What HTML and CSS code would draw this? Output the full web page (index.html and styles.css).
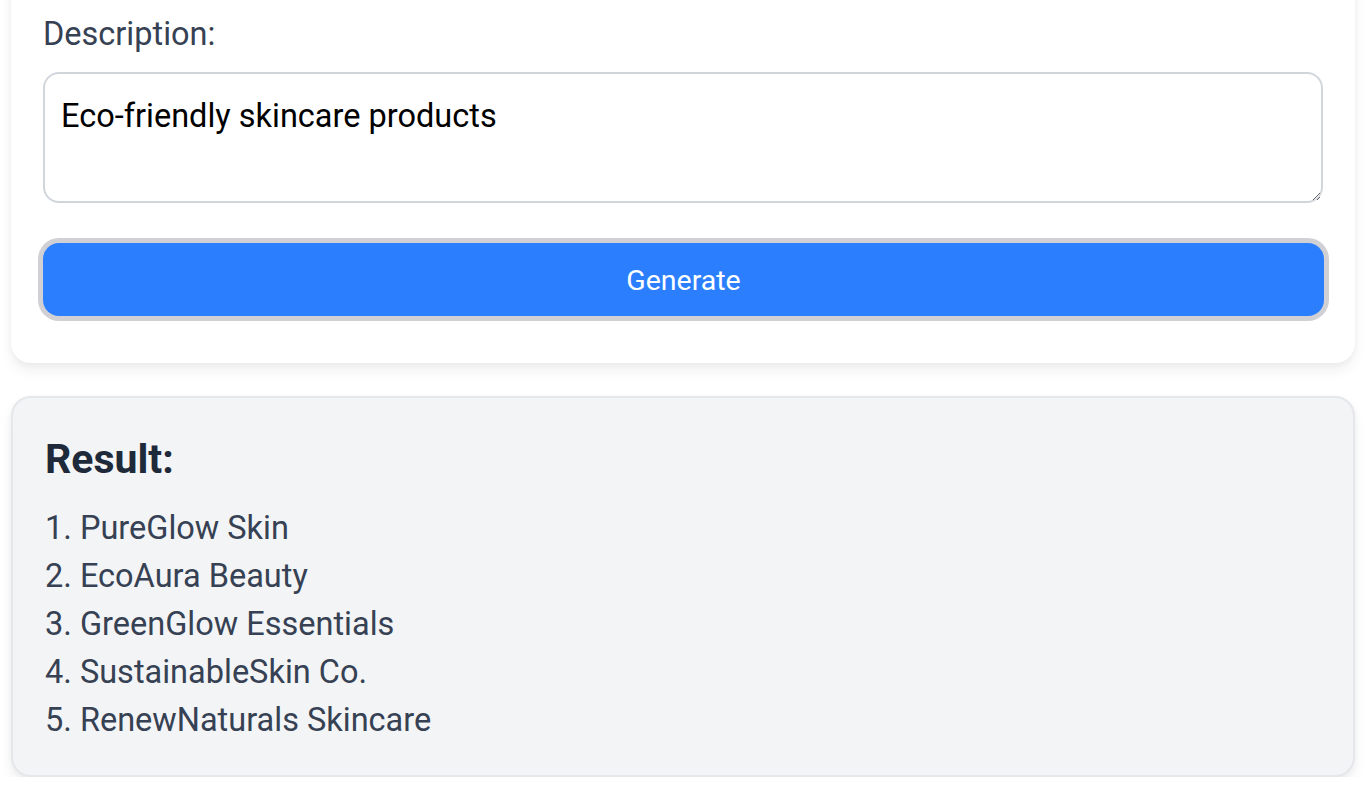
FILE: index.html
```html
<!DOCTYPE html>
<html lang="en">
<head>
<meta charset="utf-8">
<title>Name Generator</title>
<link rel="stylesheet" href="styles.css">
</head>
<body>
<main class="page">
  <section class="card form-card">
    <label class="label" for="desc">Description:</label>
    <textarea id="desc" class="textarea">Eco-friendly skincare products</textarea>
    <button class="btn" type="button">Generate</button>
  </section>
  <section class="card result-card">
    <h2 class="result-title">Result:</h2>
    <ol class="result-list">
      <li>1. PureGlow Skin</li>
      <li>2. EcoAura Beauty</li>
      <li>3. GreenGlow Essentials</li>
      <li>4. SustainableSkin Co.</li>
      <li>5. RenewNaturals Skincare</li>
    </ol>
  </section>
</main>
</body>
</html>
```
FILE: styles.css
```css
* { box-sizing: border-box; }
html, body { margin: 0; padding: 0; background: #ffffff; overflow: hidden; }
body { font-family: Roboto, "Liberation Sans", sans-serif; }

.page {
  width: 1344px;
  margin-left: 11px;
  display: flex;
  flex-direction: column;
  gap: 33px;
}

.card {
  border-radius: 20px;
  box-shadow: 0 8px 14px rgba(0, 0, 0, 0.06), 0 2px 6px rgba(0, 0, 0, 0.04);
}

.form-card {
  background: #ffffff;
  margin-top: -40px;
  padding: 50px 32px 47px;
  display: flex;
  flex-direction: column;
}

.label {
  display: block;
  font-size: 32.5px;
  line-height: 48px;
  color: #364153;
  margin-bottom: 14px;
}

.textarea {
  display: block;
  width: 1280px;
  height: 131px;
  border: 2px solid #d1d5dc;
  border-radius: 16px;
  padding: 18px 16px 16px;
  font-family: Roboto, "Liberation Sans", sans-serif;
  font-size: 32.5px;
  line-height: 48px;
  color: #000000;
  background: #ffffff;
  outline: none;
  resize: vertical;
}

.btn {
  margin-top: 40px;
  width: 1281px;
  height: 73px;
  border: none;
  border-radius: 16px;
  background: #2b7fff;
  color: #ffffff;
  font-family: Roboto, "Liberation Sans", sans-serif;
  font-size: 28.5px;
  line-height: 40px;
  padding: 2px 0 0;
  box-shadow: 0 0 0 5px #d1d0d5;
  cursor: pointer;
}

.result-card {
  background: #f3f4f6;
  border: 2px solid #e5e7eb;
  padding: 33px 32px 31px;
}

.result-title {
  margin: 0 0 17px;
  font-size: 41px;
  line-height: 56px;
  font-weight: 700;
  color: #1e2939;
}

.result-list {
  list-style: none;
  margin: 0;
  padding: 0;
  font-size: 32.5px;
  line-height: 48px;
  color: #364153;
}
```
